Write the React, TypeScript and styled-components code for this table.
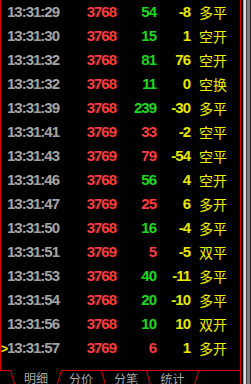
import styled, { createGlobalStyle } from "styled-components";

type Tone = "up" | "down";

interface ITick {
  time: string;
  price: string;
  vol: string;
  volTone: Tone;
  chg: string;
  kind: string;
}

const ticks: ITick[] = [
  { time: "13:31:29", price: "3768", vol: "54", volTone: "down", chg: "-8", kind: "多平" },
  { time: "13:31:30", price: "3768", vol: "15", volTone: "down", chg: "1", kind: "空开" },
  { time: "13:31:32", price: "3768", vol: "81", volTone: "down", chg: "76", kind: "空开" },
  { time: "13:31:32", price: "3768", vol: "11", volTone: "down", chg: "0", kind: "空换" },
  { time: "13:31:39", price: "3768", vol: "239", volTone: "down", chg: "-30", kind: "多平" },
  { time: "13:31:41", price: "3769", vol: "33", volTone: "up", chg: "-2", kind: "空平" },
  { time: "13:31:43", price: "3769", vol: "79", volTone: "up", chg: "-54", kind: "空平" },
  { time: "13:31:46", price: "3768", vol: "56", volTone: "down", chg: "4", kind: "空开" },
  { time: "13:31:47", price: "3769", vol: "25", volTone: "up", chg: "6", kind: "多开" },
  { time: "13:31:50", price: "3768", vol: "16", volTone: "down", chg: "-4", kind: "多平" },
  { time: "13:31:51", price: "3769", vol: "5", volTone: "up", chg: "-5", kind: "双平" },
  { time: "13:31:53", price: "3768", vol: "40", volTone: "down", chg: "-11", kind: "多平" },
  { time: "13:31:54", price: "3768", vol: "20", volTone: "down", chg: "-10", kind: "多平" },
  { time: "13:31:56", price: "3768", vol: "10", volTone: "down", chg: "10", kind: "双开" },
  { time: "13:31:57", price: "3769", vol: "6", volTone: "up", chg: "1", kind: "多开" },
];

const tabs = ["明细", "分价", "分笔", "统计"];

// little slanted tab edges, "\" or "/"
const Slant = ({ dir, w }: { dir: "back" | "fwd"; w: number }) => (
  <SlantBox $w={w}>
    <svg width={w} height={14} viewBox={`0 0 ${w} 14`}>
      {dir === "back" ? (
        <line x1={0.5} y1={0} x2={w - 0.5} y2={14} stroke="#e00000" strokeWidth={1} />
      ) : (
        <line x1={0.5} y1={14} x2={w - 0.5} y2={0} stroke="#e00000" strokeWidth={1} />
      )}
    </svg>
  </SlantBox>
);

export default function App() {
  return (
    <>
      <GlobalStyle />
      <Root>
        <Panel>
          <Table>
            {ticks.map((t, i) => (
              <Row key={i}>
                <Cursor>{i === ticks.length - 1 ? ">" : ""}</Cursor>
                <Time>{t.time}</Time>
                <Price>{t.price}</Price>
                <Vol $tone={t.volTone}>{t.vol}</Vol>
                <Chg>{t.chg}</Chg>
                <Kind>{t.kind}</Kind>
              </Row>
            ))}
          </Table>
          <TabBar>
            <Lead />
            <Slant dir="back" w={5} />
            <Tab $w={42}>{tabs[0]}</Tab>
            <Slant dir="fwd" w={5} />
            <Rest>
              <Tab $w={40}>{tabs[1]}</Tab>
              <Slant dir="back" w={5} />
              <Tab $w={40}>{tabs[2]}</Tab>
              <Slant dir="back" w={5} />
              <Tab $w={43}>{tabs[3]}</Tab>
              <Slant dir="fwd" w={5} />
            </Rest>
          </TabBar>
        </Panel>
        <ScrollEdge />
      </Root>
    </>
  );
}

const GlobalStyle = createGlobalStyle`
  html, body {
    margin: 0;
    padding: 0;
    background: #000;
  }
`;

const Root = styled.div`
  display: flex;
  width: 251px;
  height: 384px;
  background: #000;
  overflow: hidden;
`;

const Panel = styled.div`
  display: flex;
  flex-direction: column;
  width: 240px;
  border-right: 1px solid #e00000;
`;

const Table = styled.div`
  display: flex;
  flex-direction: column;
  height: 370px;
  border-left: 1px solid #e00000;
  box-sizing: border-box;
`;

const Row = styled.div`
  display: grid;
  grid-template-columns: 6px 60px 49px 40px 34px 1fr;
  height: 24px;
  line-height: 24px;
  font-family: "Liberation Sans", Arial, sans-serif;
  font-size: 15px;
  font-weight: bold;
  letter-spacing: -1px;
  white-space: nowrap;
`;

const Cursor = styled.span`
  color: #f0f000;
  font-size: 12px;
  letter-spacing: 0;
  padding-top: 1px;
`;

const Time = styled.span`
  color: #a4a4a4;
`;

const Price = styled.span`
  color: #ff3c3c;
  text-align: right;
`;

const Vol = styled.span<{ $tone: Tone }>`
  color: ${(p) => (p.$tone === "up" ? "#ff3c3c" : "#1ed81e")};
  text-align: right;
`;

const Chg = styled.span`
  color: #e8e800;
  text-align: right;
`;

const Kind = styled.span`
  padding-left: 9px;
  color: #f0f000;
  font-family: "Noto Sans CJK SC", sans-serif;
  font-size: 14px;
  font-weight: normal;
  letter-spacing: 0;
`;

const TabBar = styled.div`
  display: flex;
  height: 14px;
  overflow: hidden;
`;

const Lead = styled.div`
  width: 10px;
  border-top: 1px solid #e00000;
`;

const Rest = styled.div`
  display: flex;
  flex: 1;
  border-top: 1px solid #e00000;
  margin-left: -1px;
`;

const SlantBox = styled.div<{ $w: number }>`
  width: ${(p) => p.$w}px;
  height: 14px;
  flex: none;

  svg {
    display: block;
  }
`;

const Tab = styled.div<{ $w: number }>`
  width: ${(p) => p.$w}px;
  flex: none;
  text-align: center;
  color: #a8a8a8;
  font-family: "Noto Sans CJK SC", sans-serif;
  font-size: 12px;
  line-height: 16px;
`;

const ScrollEdge = styled.div`
  width: 10px;
  height: 100%;
  background: linear-gradient(
    to right,
    #000 0 2px,
    #a0a0a0 2px 3px,
    #e4e4e4 3px 5px,
    #404040 5px 6px,
    #808080 6px 9px,
    #282828 9px 10px
  );
`;
